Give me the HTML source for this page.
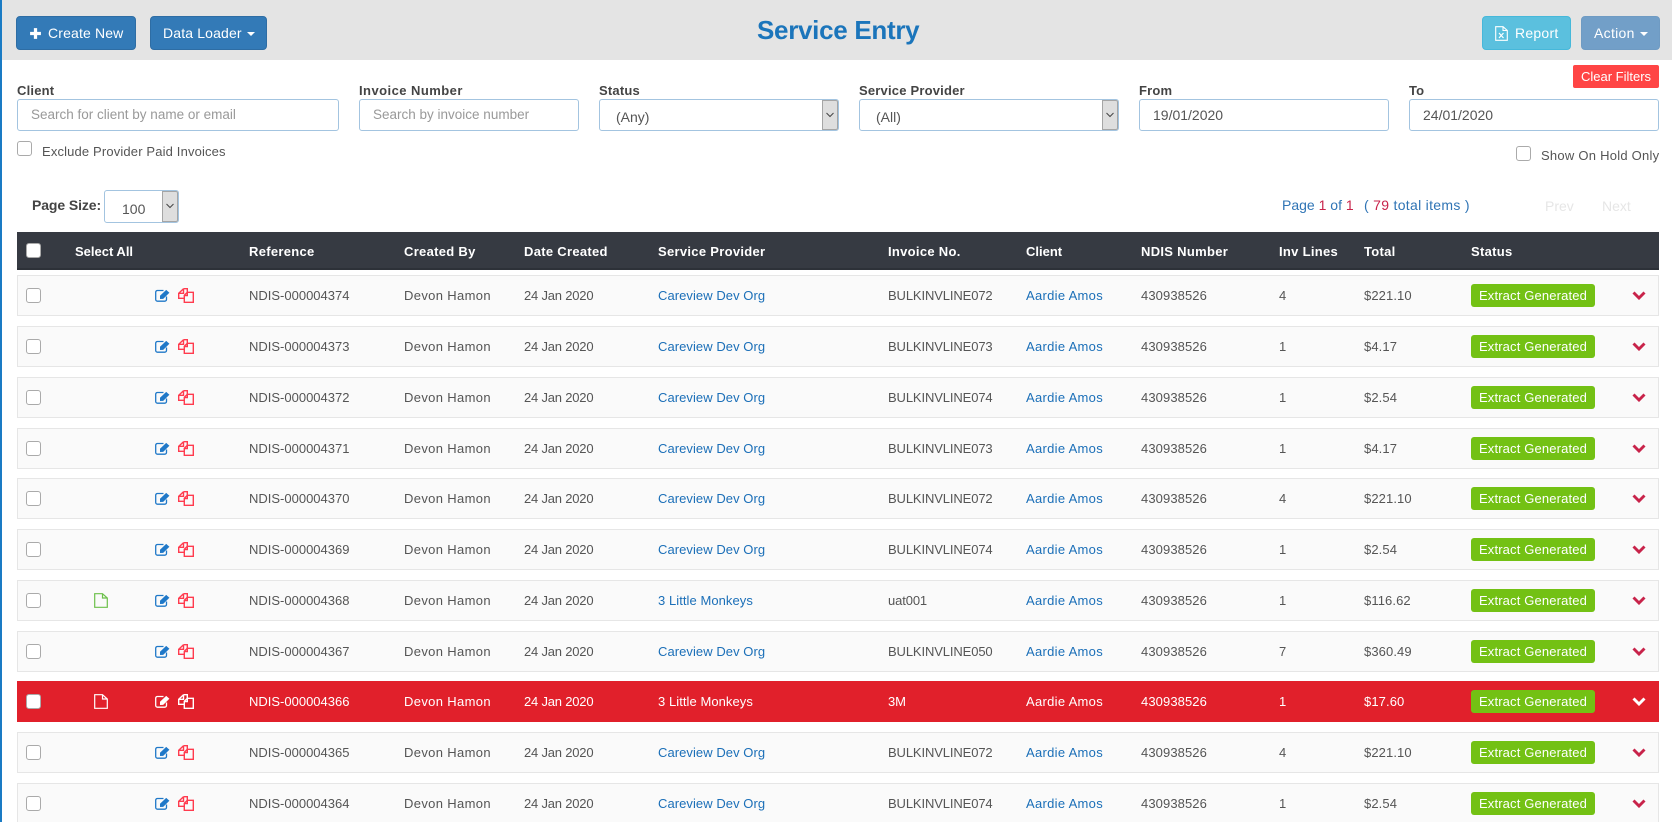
<!DOCTYPE html>
<html lang="en"><head><meta charset="utf-8"><title>Service Entry</title>
<style>
html,body{margin:0;padding:0;width:1672px;height:822px;overflow:hidden;background:#fff}
body{font:13px "Liberation Sans",sans-serif;color:#555;position:relative}
div,span,a,svg,b,i{position:absolute;white-space:nowrap}
#bar{left:0;top:0;width:2px;height:822px;background:#1a7bc4;z-index:3}
#head{left:0;top:0;width:1672px;height:60px;background:#e4e4e4}
.btn{top:16px;height:34px;line-height:32px;box-sizing:border-box;border:1px solid #2e6da4;border-radius:4px;background:#337ab7;color:#fff;font-size:14px}
.btn span{top:0;letter-spacing:.15px}
.car{width:0;height:0;border:4px solid transparent;border-top-color:#fff;border-bottom:0;top:15px}
#title{left:757px;top:12px;font-size:26px;line-height:36px;color:#1b75bb;font-weight:bold;letter-spacing:-.3px}
.lb{top:83px;line-height:16px;font-weight:bold;color:#444;font-size:13px;letter-spacing:.2px}
.in{top:99px;height:32px;box-sizing:border-box;border:1px solid #a3c4e0;border-radius:3px;background:#fff;font-size:14px;line-height:30px;color:#555}
.in span{left:13px;top:0}
.ph{color:#999;font-size:13.5px}
.arr{top:0;right:0;width:16px;height:30px;background:#dedede;border:1px solid #a5a5a5;box-sizing:border-box;border-radius:0 2px 2px 0}
.arr svg{left:3px;top:11px}
.cb{width:15px;height:15px;box-sizing:border-box;border:1px solid #aaa;border-radius:3px;background:#fff}
.t{color:#555;line-height:16px}
#clear{left:1573px;top:65px;width:86px;height:23px;line-height:23px;background:#ff4545;border-radius:2px;color:#fff;text-align:center;font-size:13px}
#thead{left:17px;top:232px;width:1642px;height:38px;background:#363a42;border-bottom:2px solid #2d3138;box-sizing:border-box}
.th{top:244px;line-height:16px;color:#fff;font-weight:bold;font-size:13px;letter-spacing:.3px}
.r{left:17px;width:1642px;height:41px;box-sizing:border-box;background:#fafafa;border:1px solid #e6e6e6;border-width:1.5px}
.r .x{top:12px;line-height:16px;color:#555}
.r a{top:12px;line-height:16px;color:#1b6fb8;text-decoration:none}
.r .cb{left:8px;top:12px}
.r .e{left:137px;top:13px}
.r .c{left:160px;top:12px}
.r .f{left:76px;top:12px}
.r .d{left:1614px;top:15px;color:#c8234a}
.bd{left:1453px;top:8px;width:124px;height:23px;line-height:23px;background:#73c114;border-radius:3px;color:#fff;text-align:center;font-size:13px;letter-spacing:.15px}
.c1{left:231px}.c2{left:386px;letter-spacing:.35px}.c3{left:506px;letter-spacing:-.2px}.c4{left:640px;letter-spacing:.06px}.c5{left:870px;letter-spacing:-.12px}.c6{left:1008px;letter-spacing:.3px}.c7{left:1123px;letter-spacing:.1px}.c8{left:1261px}.c9{left:1346px;letter-spacing:.1px}
.red{background:#e1202b;border-color:#e1202b}
.red .x,.red a{color:#fff}
.red .e,.red .c,.red .f,.red .d{color:#fff}
.e{color:#1f78c8}.c{color:#ff3b4e}.f{color:#6cc04a}
.sr{color:#c8234a}.lk{color:#2f74b5}
</style></head><body>
<svg width="0" height="0" style="left:0;top:0"><defs>
<symbol id="ie" viewBox="0 0 16 13"><path d="M11.5 7.5v3A1.7 1.7 0 0 1 9.8 12.2H2.4A1.7 1.7 0 0 1 .7 10.500V3.200A1.700 1.700 0 0 1 2.400 1.500H8.500" fill="none" stroke="currentColor" stroke-width="1.300"/><path d="M5 6.800 11.200.9 14.400 3.800 8.200 9.900 5 10z" fill="currentColor"/></symbol>
<symbol id="ic" viewBox="0 0 16 15"><path d="M5.500.7H9.300V4M5.500.7.700 5.300V10.300H6M5.500.7V5.300H.7" fill="none" stroke="currentColor" stroke-width="1.400"/><path d="M9.300 4.300H15.300V14.300H6.300V7.300Z" fill="none" stroke="currentColor" stroke-width="1.400"/><path d="M9.300 4.300V7.500H6.300" fill="none" stroke="currentColor" stroke-width="1.400"/></symbol>
<symbol id="if" viewBox="0 0 14 15"><path d="M.7.700H8.500L13.300 5V14.300H.7Z M8.500.7V5H13.300" fill="none" stroke="currentColor" stroke-width="1.200"/></symbol>
<symbol id="id" viewBox="0 0 14 9"><path d="M1.500 1.500 7 7 12.500 1.500" fill="none" stroke="currentColor" stroke-width="2.900"/></symbol>
</defs></svg>
<div id="bar"></div>
<div id="head"></div>
<div class="btn" style="left:16px;width:120px"><svg style="left:12px;top:10px" width="13" height="13" viewBox="0 0 12 12"><path d="M6 1v10M1 6h10" stroke="#fff" stroke-width="3"/></svg><span style="left:31px">Create New</span></div>
<div class="btn" style="left:150px;width:117px"><span style="left:12px">Data Loader</span><i class="car" style="left:96px"></i></div>
<div id="title">Service Entry</div>
<div class="btn" style="left:1482px;width:89px;background:#5bc0de;border-color:#46b8da"><svg style="left:12px;top:9px" width="13" height="15" viewBox="0 0 13 15"><path d="M.7.700H8L12.300 4.500V14.300H.7ZM8 .7V4.500H12.300" fill="none" stroke="#fff" stroke-width="1.100"/><path d="M4 7l4.500 5M8.500 7 4 12" stroke="#fff" stroke-width="1.200"/></svg><span style="left:32px;letter-spacing:.25px">Report</span></div>
<div class="btn" style="left:1581px;width:79px;background:#729fc8;border-color:#6f9bc3"><span style="left:12px;letter-spacing:.3px">Action</span><i class="car" style="left:58px"></i></div>
<div id="clear">Clear Filters</div>
<div class="lb" style="left:17px">Client</div>
<div class="lb" style="left:359px;letter-spacing:.45px">Invoice Number</div>
<div class="lb" style="left:599px">Status</div>
<div class="lb" style="left:859px">Service Provider</div>
<div class="lb" style="left:1139px">From</div>
<div class="lb" style="left:1409px">To</div>
<div class="in" style="left:17px;width:322px"><span class="ph">Search for client by name or email</span></div>
<div class="in" style="left:359px;width:220px"><span class="ph">Search by invoice number</span></div>
<div class="in" style="left:599px;width:240px"><span style="left:16px;top:2px">(Any)</span><div class="arr"><svg width="8" height="6" viewBox="0 0 8 6"><path d="M.5 1 4 4.500 7.500 1" fill="none" stroke="#444"/></svg></div></div>
<div class="in" style="left:859px;width:260px"><span style="left:16px;top:2px">(All)</span><div class="arr"><svg width="8" height="6" viewBox="0 0 8 6"><path d="M.5 1 4 4.500 7.500 1" fill="none" stroke="#444"/></svg></div></div>
<div class="in" style="left:1139px;width:250px"><span>19/01/2020</span></div>
<div class="in" style="left:1409px;width:250px"><span>24/01/2020</span></div>
<div class="cb" style="left:17px;top:141px"></div>
<div class="t" style="left:42px;top:144px;letter-spacing:.15px">Exclude Provider Paid Invoices</div>
<div class="cb" style="left:1516px;top:146px"></div>
<div class="t" style="left:1541px;top:148px;letter-spacing:.25px">Show On Hold Only</div>
<div class="t" style="left:32px;top:197px;font-weight:bold;color:#444;font-size:14px;letter-spacing:-.1px">Page Size:</div>
<div class="in" style="left:104px;top:190px;width:75px;height:33px"><span style="left:17px;top:3px">100</span><div class="arr" style="height:31px"><svg width="8" height="6" viewBox="0 0 8 6"><path d="M.5 1 4 4.500 7.500 1" fill="none" stroke="#444"/></svg></div></div>
<div class="t" style="left:1282px;top:197px;font-size:14px;color:#2f74b5">Page <span class="sr" style="position:static">1</span> of <span class="sr" style="position:static">1</span></div>
<div class="t" style="left:1364px;top:197px;font-size:14px;color:#2f74b5;letter-spacing:.3px">( <span class="sr" style="position:static">79</span> total items )</div>
<div class="t" style="left:1545px;top:198px;font-size:14px;color:#e6e6e6">Prev</div>
<div class="t" style="left:1602px;top:198px;font-size:14px;color:#e6e6e6">Next</div>

<div id="thead"></div>
<div class="cb" style="left:26px;top:243px"></div>
<div class="th" style="left:75px;letter-spacing:0">Select All</div>
<div class="th" style="left:249px">Reference</div>
<div class="th" style="left:404px">Created By</div>
<div class="th" style="left:524px">Date Created</div>
<div class="th" style="left:658px">Service Provider</div>
<div class="th" style="left:888px">Invoice No.</div>
<div class="th" style="left:1026px;letter-spacing:0">Client</div>
<div class="th" style="left:1141px">NDIS Number</div>
<div class="th" style="left:1279px">Inv Lines</div>
<div class="th" style="left:1364px">Total</div>
<div class="th" style="left:1471px">Status</div>

<div class="r" style="top:275px"><div class="cb"></div><svg class="e" width="16" height="13"><use href="#ie"/></svg><svg class="c" width="16" height="15"><use href="#ic"/></svg><span class="x c1">NDIS-000004374</span><span class="x c2">Devon Hamon</span><span class="x c3">24 Jan 2020</span><a class="c4">Careview Dev Org</a><span class="x c5">BULKINVLINE072</span><a class="c6">Aardie Amos</a><span class="x c7">430938526</span><span class="x c8">4</span><span class="x c9">$221.10</span><div class="bd">Extract Generated</div><svg class="d" width="14" height="9"><use href="#id"/></svg></div>
<div class="r" style="top:326px"><div class="cb"></div><svg class="e" width="16" height="13"><use href="#ie"/></svg><svg class="c" width="16" height="15"><use href="#ic"/></svg><span class="x c1">NDIS-000004373</span><span class="x c2">Devon Hamon</span><span class="x c3">24 Jan 2020</span><a class="c4">Careview Dev Org</a><span class="x c5">BULKINVLINE073</span><a class="c6">Aardie Amos</a><span class="x c7">430938526</span><span class="x c8">1</span><span class="x c9">$4.17</span><div class="bd">Extract Generated</div><svg class="d" width="14" height="9"><use href="#id"/></svg></div>
<div class="r" style="top:377px"><div class="cb"></div><svg class="e" width="16" height="13"><use href="#ie"/></svg><svg class="c" width="16" height="15"><use href="#ic"/></svg><span class="x c1">NDIS-000004372</span><span class="x c2">Devon Hamon</span><span class="x c3">24 Jan 2020</span><a class="c4">Careview Dev Org</a><span class="x c5">BULKINVLINE074</span><a class="c6">Aardie Amos</a><span class="x c7">430938526</span><span class="x c8">1</span><span class="x c9">$2.54</span><div class="bd">Extract Generated</div><svg class="d" width="14" height="9"><use href="#id"/></svg></div>
<div class="r" style="top:428px"><div class="cb"></div><svg class="e" width="16" height="13"><use href="#ie"/></svg><svg class="c" width="16" height="15"><use href="#ic"/></svg><span class="x c1">NDIS-000004371</span><span class="x c2">Devon Hamon</span><span class="x c3">24 Jan 2020</span><a class="c4">Careview Dev Org</a><span class="x c5">BULKINVLINE073</span><a class="c6">Aardie Amos</a><span class="x c7">430938526</span><span class="x c8">1</span><span class="x c9">$4.17</span><div class="bd">Extract Generated</div><svg class="d" width="14" height="9"><use href="#id"/></svg></div>
<div class="r" style="top:478px"><div class="cb"></div><svg class="e" width="16" height="13"><use href="#ie"/></svg><svg class="c" width="16" height="15"><use href="#ic"/></svg><span class="x c1">NDIS-000004370</span><span class="x c2">Devon Hamon</span><span class="x c3">24 Jan 2020</span><a class="c4">Careview Dev Org</a><span class="x c5">BULKINVLINE072</span><a class="c6">Aardie Amos</a><span class="x c7">430938526</span><span class="x c8">4</span><span class="x c9">$221.10</span><div class="bd">Extract Generated</div><svg class="d" width="14" height="9"><use href="#id"/></svg></div>
<div class="r" style="top:529px"><div class="cb"></div><svg class="e" width="16" height="13"><use href="#ie"/></svg><svg class="c" width="16" height="15"><use href="#ic"/></svg><span class="x c1">NDIS-000004369</span><span class="x c2">Devon Hamon</span><span class="x c3">24 Jan 2020</span><a class="c4">Careview Dev Org</a><span class="x c5">BULKINVLINE074</span><a class="c6">Aardie Amos</a><span class="x c7">430938526</span><span class="x c8">1</span><span class="x c9">$2.54</span><div class="bd">Extract Generated</div><svg class="d" width="14" height="9"><use href="#id"/></svg></div>
<div class="r" style="top:580px"><div class="cb"></div><svg class="f" width="14" height="15"><use href="#if"/></svg><svg class="e" width="16" height="13"><use href="#ie"/></svg><svg class="c" width="16" height="15"><use href="#ic"/></svg><span class="x c1">NDIS-000004368</span><span class="x c2">Devon Hamon</span><span class="x c3">24 Jan 2020</span><a class="c4">3 Little Monkeys</a><span class="x c5">uat001</span><a class="c6">Aardie Amos</a><span class="x c7">430938526</span><span class="x c8">1</span><span class="x c9">$116.62</span><div class="bd">Extract Generated</div><svg class="d" width="14" height="9"><use href="#id"/></svg></div>
<div class="r" style="top:631px"><div class="cb"></div><svg class="e" width="16" height="13"><use href="#ie"/></svg><svg class="c" width="16" height="15"><use href="#ic"/></svg><span class="x c1">NDIS-000004367</span><span class="x c2">Devon Hamon</span><span class="x c3">24 Jan 2020</span><a class="c4">Careview Dev Org</a><span class="x c5">BULKINVLINE050</span><a class="c6">Aardie Amos</a><span class="x c7">430938526</span><span class="x c8">7</span><span class="x c9">$360.49</span><div class="bd">Extract Generated</div><svg class="d" width="14" height="9"><use href="#id"/></svg></div>
<div class="r red" style="top:681px"><div class="cb"></div><svg class="f" width="14" height="15"><use href="#if"/></svg><svg class="e" width="16" height="13"><use href="#ie"/></svg><svg class="c" width="16" height="15"><use href="#ic"/></svg><span class="x c1">NDIS-000004366</span><span class="x c2">Devon Hamon</span><span class="x c3">24 Jan 2020</span><a class="c4">3 Little Monkeys</a><span class="x c5">3M</span><a class="c6">Aardie Amos</a><span class="x c7">430938526</span><span class="x c8">1</span><span class="x c9">$17.60</span><div class="bd">Extract Generated</div><svg class="d" width="14" height="9"><use href="#id"/></svg></div>
<div class="r" style="top:732px"><div class="cb"></div><svg class="e" width="16" height="13"><use href="#ie"/></svg><svg class="c" width="16" height="15"><use href="#ic"/></svg><span class="x c1">NDIS-000004365</span><span class="x c2">Devon Hamon</span><span class="x c3">24 Jan 2020</span><a class="c4">Careview Dev Org</a><span class="x c5">BULKINVLINE072</span><a class="c6">Aardie Amos</a><span class="x c7">430938526</span><span class="x c8">4</span><span class="x c9">$221.10</span><div class="bd">Extract Generated</div><svg class="d" width="14" height="9"><use href="#id"/></svg></div>
<div class="r" style="top:783px"><div class="cb"></div><svg class="e" width="16" height="13"><use href="#ie"/></svg><svg class="c" width="16" height="15"><use href="#ic"/></svg><span class="x c1">NDIS-000004364</span><span class="x c2">Devon Hamon</span><span class="x c3">24 Jan 2020</span><a class="c4">Careview Dev Org</a><span class="x c5">BULKINVLINE074</span><a class="c6">Aardie Amos</a><span class="x c7">430938526</span><span class="x c8">1</span><span class="x c9">$2.54</span><div class="bd">Extract Generated</div><svg class="d" width="14" height="9"><use href="#id"/></svg></div>
</body></html>
